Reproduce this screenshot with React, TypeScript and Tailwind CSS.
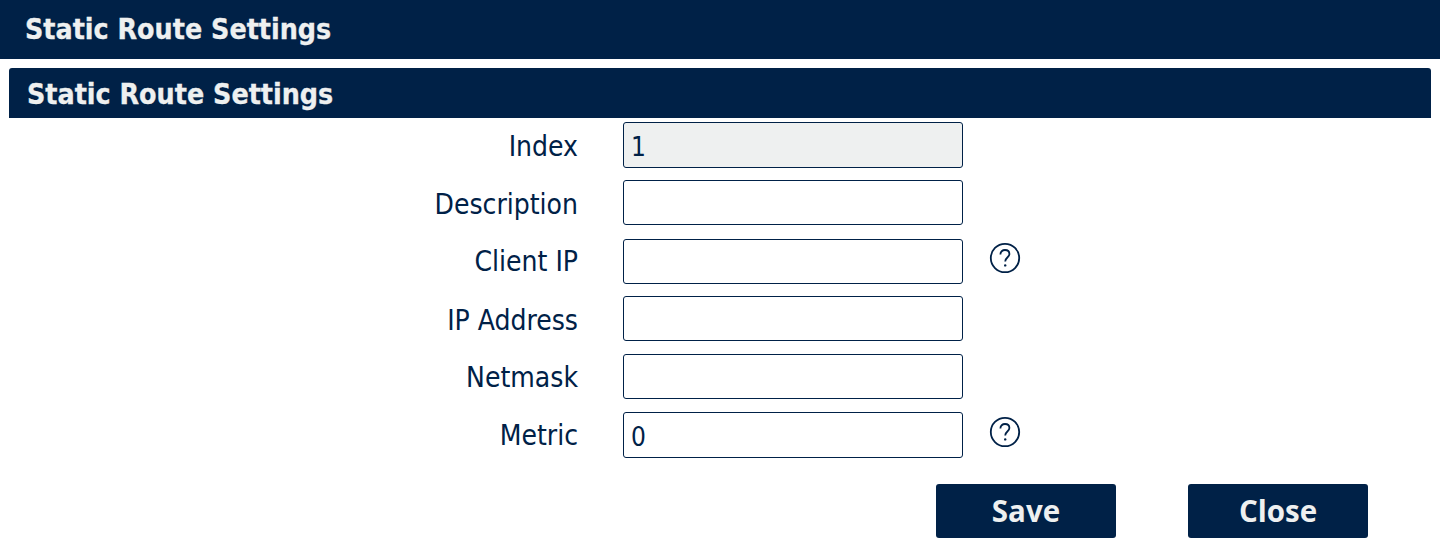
const labelFont = "font-['DejaVu_Sans',sans-serif] [font-stretch:condensed]";

const rows = [
  { label: "Index", value: "1", disabled: true, help: false, rowClass: "mt-1 h-[46px]", labelClass: "pt-1" },
  { label: "Description", value: "", disabled: false, help: false, rowClass: "mt-3 h-[45px]", labelClass: "pt-1" },
  { label: "Client IP", value: "", disabled: false, help: true, rowClass: "mt-3.5 h-[45px]", labelClass: "pt-0" },
  { label: "IP Address", value: "", disabled: false, help: false, rowClass: "mt-3 h-[45px]", labelClass: "pt-1" },
  { label: "Netmask", value: "", disabled: false, help: false, rowClass: "mt-[13px] h-[45px]", labelClass: "pt-0.5" },
  { label: "Metric", value: "0", disabled: false, help: true, rowClass: "mt-[13px] h-[46px]", labelClass: "pt-0.5" },
];

function HelpIcon({ label }: { label: string }) {
  return (
    <svg
      width="32"
      height="32"
      viewBox="0 0 32 32"
      fill="none"
      stroke="#002147"
      className={`ml-[26px] ${label === "Client IP" ? "-mt-2" : "-mt-1.5"}`}
    >
      <circle cx="16" cy="16" r="14.2" strokeWidth="1.8" />
      <path d="M11.4 12.4c0-2.6 2-4.4 4.6-4.4s4.4 1.7 4.4 4c0 3.4-4.2 3.6-4.2 7.4" strokeWidth="1.8" />
      <circle cx="16.2" cy="23.4" r="1.2" fill="#002147" stroke="none" />
    </svg>
  );
}

export default function App() {
  return (
    <div className="min-h-[542px] bg-white text-[#002147]">
      <div className={`flex h-[59px] items-center pl-[25px] pt-0.5 text-[28.3px] font-bold text-[#eef0f0] bg-[#002147] [-webkit-text-stroke:0.3px_#eef0f0] ${labelFont}`}>
        Static Route Settings
      </div>
      <div className={`mx-[9px] mt-[9px] flex h-[50px] items-center rounded-t-[3px] pl-[18px] pt-1 text-[28.3px] font-bold text-[#eef0f0] bg-[#002147] [-webkit-text-stroke:0.3px_#eef0f0] ${labelFont}`}>
        Static Route Settings
      </div>

      <div className="flex flex-col">
        {rows.map((row) => (
          <div key={row.label} className={`flex items-center ${row.rowClass}`}>
            <label className={`w-[578px] text-right text-[28px] leading-none ${labelFont} ${row.labelClass}`}>{row.label}</label>
            <input
              readOnly
              value={row.value}
              className={`ml-[45px] h-full w-[340px] rounded-[3px] border border-[#002147] pl-[7px] pr-2 pt-1 text-[26px] outline-none ${labelFont} ${
                row.disabled ? "bg-[#eef0f0]" : "bg-white"
              }`}
            />
            {row.help && <HelpIcon label={row.label} />}
          </div>
        ))}
      </div>

      <div className="mt-[26px] flex pl-[936px]">
        <button className="h-[54px] w-[180px] rounded-[3px] bg-[#002147] font-['Open_Sans',sans-serif] text-[29.5px] font-bold text-[#eef0f0]">
          Save
        </button>
        <button className="ml-[72px] h-[54px] w-[180px] rounded-[3px] bg-[#002147] font-['Open_Sans',sans-serif] text-[29.5px] font-bold text-[#eef0f0]">
          Close
        </button>
      </div>
    </div>
  );
}
